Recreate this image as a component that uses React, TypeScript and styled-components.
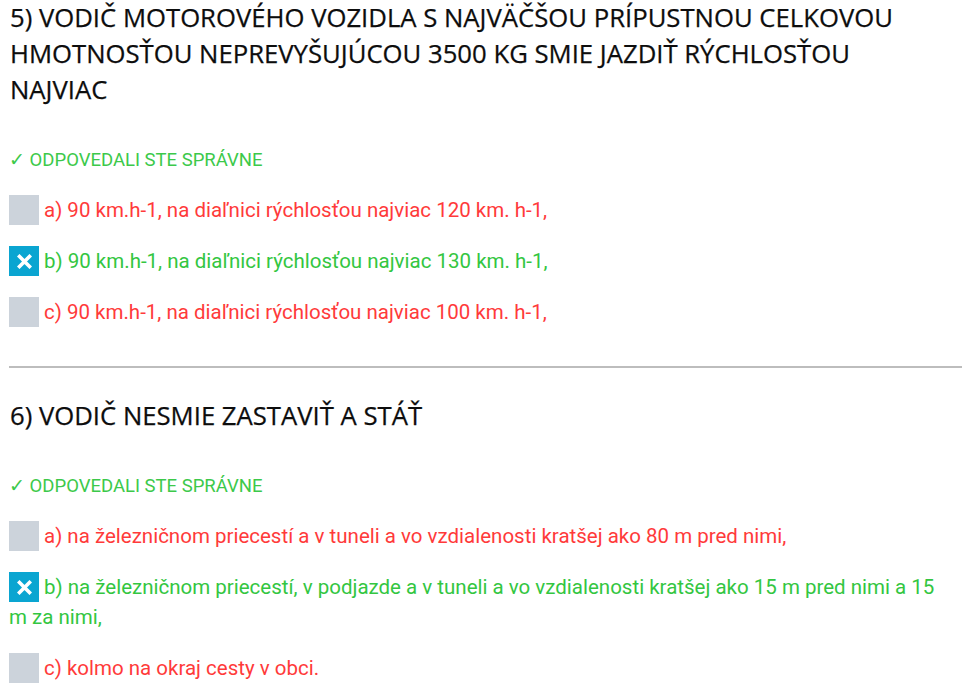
import React from "react";
import styled, { createGlobalStyle } from "styled-components";

const Global = createGlobalStyle`
  html, body { margin: 0; padding: 0; background: #fff; }
  body { font-family: Roboto, "Liberation Sans", sans-serif; }
`;

const Page = styled.div`
  padding: 0 1px 0 9px;
  width: 963px;
  box-sizing: border-box;
`;

const Question = styled.section`
  display: flex;
  flex-direction: column;
  padding-right: 18px;
`;

const Title = styled.h2`
  margin: 0;
  padding: 0 0 0 1px;
  font-family: "Open Sans", sans-serif;
  font-weight: 400;
  font-size: 25.7px;
  line-height: 36px;
  color: #0d0d0d;
  text-transform: uppercase;
  -webkit-text-stroke: 0.25px #0d0d0d;
`;

const Status = styled.div`
  margin: 41px 0 24px;
  font-family: Roboto, sans-serif;
  font-size: 18.5px;
  line-height: 22px;
  color: #3cc94a;
  text-transform: uppercase;
`;

const Answers = styled.div`
  display: flex;
  flex-direction: column;
  gap: 21px;
`;

const Answer = styled.p<{ $correct: boolean }>`
  margin: 0;
  font-family: Roboto, sans-serif;
  font-size: 20.5px;
  line-height: 30px;
  color: ${(p) => (p.$correct ? "#33c641" : "#ff3a3a")};
`;

const Box = styled.span<{ $checked: boolean }>`
  display: inline-flex;
  align-items: center;
  justify-content: center;
  width: 30px;
  height: 30px;
  margin-right: 5px;
  vertical-align: top;
  background: ${(p) => (p.$checked ? "#0aa5d1" : "#ccd3db")};
`;

const Divider = styled.hr`
  border: none;
  border-top: 2px solid #bdbdbd;
  margin: 39px 0 30px;
`;

const Cross = () => (
  <svg width="15" height="15" viewBox="0 0 15 15">
    <path d="M2.5 2.5 L12.5 12.5 M12.5 2.5 L2.5 12.5" stroke="#fff" strokeWidth="3.6" strokeLinecap="square" />
  </svg>
);

type Q = { title: string; answers: { text: string; correct: boolean }[] };

const data: Q[] = [
  {
    title:
      "5) Vodič motorového vozidla s najväčšou prípustnou celkovou hmotnosťou neprevyšujúcou 3500 kg smie jazdiť rýchlosťou najviac",
    answers: [
      { text: "a) 90 km.h-1, na diaľnici rýchlosťou najviac 120 km. h-1,", correct: false },
      { text: "b) 90 km.h-1, na diaľnici rýchlosťou najviac 130 km. h-1,", correct: true },
      { text: "c) 90 km.h-1, na diaľnici rýchlosťou najviac 100 km. h-1,", correct: false },
    ],
  },
  {
    title: "6) Vodič nesmie zastaviť a stáť",
    answers: [
      {
        text: "a) na železničnom priecestí a v tuneli a vo vzdialenosti kratšej ako 80 m pred nimi,",
        correct: false,
      },
      {
        text: "b) na železničnom priecestí, v podjazde a v tuneli a vo vzdialenosti kratšej ako 15 m pred nimi a 15 m za nimi,",
        correct: true,
      },
      { text: "c) kolmo na okraj cesty v obci.", correct: false },
    ],
  },
];

export default function App() {
  return (
    <Page>
      <Global />
      {data.map((q, i) => (
        <React.Fragment key={i}>
          {i > 0 && <Divider />}
          <Question>
            <Title>{q.title}</Title>
            <Status>✓ Odpovedali ste správne</Status>
            <Answers>
              {q.answers.map((a, j) => (
                <Answer key={j} $correct={a.correct}>
                  <Box $checked={a.correct}>{a.correct && <Cross />}</Box>
                  {a.text}
                </Answer>
              ))}
            </Answers>
          </Question>
        </React.Fragment>
      ))}
    </Page>
  );
}
